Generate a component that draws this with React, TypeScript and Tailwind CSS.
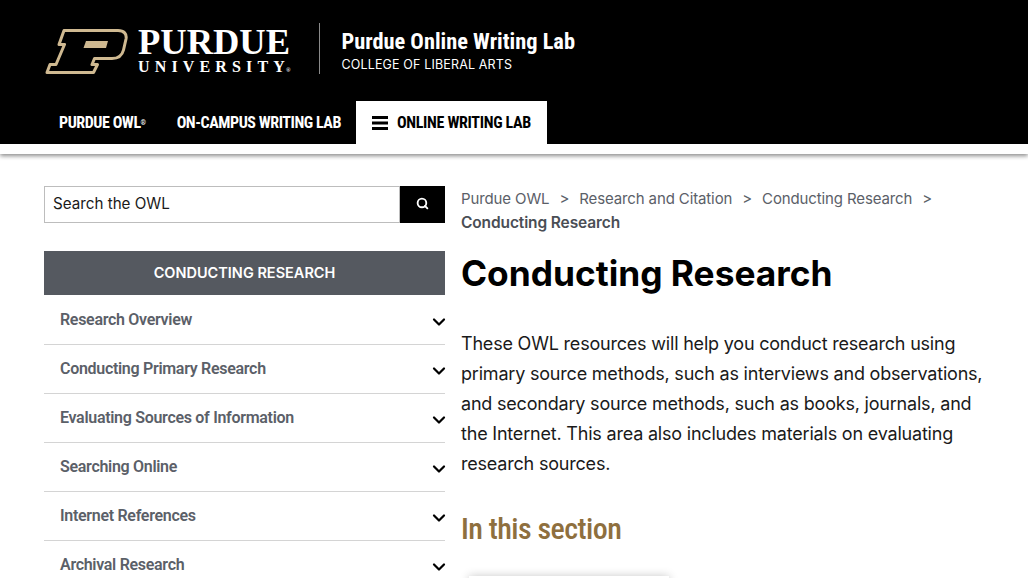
import { ChevronDown, Search } from "lucide-react";

const acumin = "font-['Inter','Liberation_Sans',sans-serif]";
const condensed = "font-['Roboto','Liberation_Sans',sans-serif] [font-stretch:75%]";

const sideItems = [
  "Research Overview",
  "Conducting Primary Research",
  "Evaluating Sources of Information",
  "Searching Online",
  "Internet References",
  "Archival Research",
];

const PurdueP = () => (
  <svg viewBox="0 0 84 46" className="h-[46px] w-[84px] shrink-0">
    <path
      d="M20 2.5H74C80 2.500 83 6 82 11L79.500 22C78 28 74 30.500 68 30.500H50.500L48 36.500H53.500L49.500 44.500H3L6 36.500H12L20.500 16.500H15Z"
      fill="#000"
      stroke="#cfb991"
      strokeWidth="3"
      strokeLinejoin="round"
    />
    <path d="M42 13H64L62 20H39.500Z" fill="#cfb991" />
  </svg>
);

const Logo = () => (
  <div className="mt-[4px] flex items-center">
    <PurdueP />
    <div className="ml-[10px] flex flex-col font-['Liberation_Serif',serif] text-white">
      <span className="h-[30px] text-[36.500px] font-bold leading-[30px]">PURDUE</span>
      <span className="mt-[3px] flex h-[14px] items-end text-[16px] font-bold leading-[14px] tracking-[5.150px]">
        UNIVERSITY
        <span className="-ml-[4px] text-[6px] leading-[8px] tracking-normal">®</span>
      </span>
    </div>
  </div>
);

const NavLink = ({ children }: { children: React.ReactNode }) => (
  <a className={`flex h-[43px] items-center px-[15px] pt-[1px] text-[16px] font-bold tracking-[-0.45px] text-white ${condensed}`}>{children}</a>
);

const Bars = () => (
  <svg viewBox="0 0 16 14" className="h-[14px] w-[16px]">
    <rect width="16" height="3" />
    <rect y="5.500" width="16" height="3" />
    <rect y="11" width="16" height="3" />
  </svg>
);

export default function App() {
  return (
    <div className={`h-[578px] w-[1028px] overflow-hidden bg-white ${acumin}`}>
      <header className="h-[144px] bg-black pl-[44px]">
        <div className="flex h-[101px] items-start pt-[23px]">
          <Logo />
          <div className="ml-[29px] h-[51px] w-px bg-[#8a8a8a]" />
          <div className="ml-[21px] mt-[4px] flex flex-col text-white">
            <span className={`text-[22.400px] font-bold leading-[28px] ${condensed}`}>Purdue Online Writing Lab</span>
            <span className="mt-[2px] text-[12.500px] leading-[16px] tracking-[0.15px]">COLLEGE OF LIBERAL ARTS</span>
          </div>
        </div>
        <nav className="flex h-[43px]">
          <NavLink>
            <span className="pr-[1px]">
              PURDUE OWL<sup className="text-[7px]">®</sup>
            </span>
          </NavLink>
          <NavLink>ON-CAMPUS WRITING LAB</NavLink>
          <a className={`flex items-center gap-[9px] bg-white px-[16px] pt-[1px] text-[16px] font-bold tracking-[-0.33px] text-black ${condensed}`}>
            <Bars />
            ONLINE WRITING LAB
          </a>
        </nav>
      </header>
      <div className="h-[10px] bg-white shadow-[0_2px_4px_rgba(0,0,0,0.45)]" />
      <main className="flex pl-[44px] pt-[32px]">
        <aside className="w-[401px] shrink-0">
          <div className="flex h-[37px]">
            <div className="flex flex-1 items-center border border-[#bdbdbd] pl-[8px] text-[15.200px] text-[#1a1a1a]">
              Search the OWL
            </div>
            <div className="flex w-[45px] items-center justify-center bg-black pb-[3px]">
              <Search size={13} strokeWidth={3.4} className="text-white" />
            </div>
          </div>
          <div className="mb-px mt-[28px] flex h-[44px] items-center justify-center bg-[#555960] text-[14.500px] font-semibold text-white">
            CONDUCTING RESEARCH
          </div>
          {sideItems.map((item) => (
            <div key={item} className="flex h-[49px] items-center justify-between border-b border-[#d4d4d4] pl-[16px]">
              <span className="text-[16px] font-semibold tracking-[-0.3px] text-[#5b6068] [font-family:Roboto,sans-serif] [font-stretch:90%]">{item}</span>
              <ChevronDown size={20} strokeWidth={2.7} className="mr-[-4px] mt-[3px] text-black" />
            </div>
          ))}
        </aside>
        <section className="ml-[16px] w-[525px]">
          <div className="pt-[1px] text-[15px] leading-[24px] tracking-[-0.12px] text-[#5b6068]">
            <div className="flex gap-[10px]">
              <span>Purdue OWL</span>
              <span>&gt;</span>
              <span>Research and Citation</span>
              <span>&gt;</span>
              <span>Conducting Research</span>
              <span>&gt;</span>
            </div>
            <div className="text-[15.500px] font-semibold text-[#4a4e55]">Conducting Research</div>
          </div>
          <h1 className="mt-[17px] text-[35.300px] font-bold leading-[44px] text-black">Conducting Research</h1>
          <p className="mt-[33px] text-[18px] leading-[30px] tracking-[-0.2px] text-[#1a1a1a]">
            These OWL resources will help you conduct research using primary source methods, such as interviews and
            observations, and secondary source methods, such as books, journals, and the Internet. This area also
            includes materials on evaluating research sources.
          </p>
          <h2 className={`mt-[30px] text-[30px] font-medium leading-[40px] tracking-[-0.55px] text-[#8e6f3e] ${condensed}`}>In this section</h2>
          <div className="ml-[8px] mt-[27px] h-[20px] w-[200px] shadow-[0_0_10px_rgba(0,0,0,0.22)]" />
        </section>
      </main>
    </div>
  );
}
